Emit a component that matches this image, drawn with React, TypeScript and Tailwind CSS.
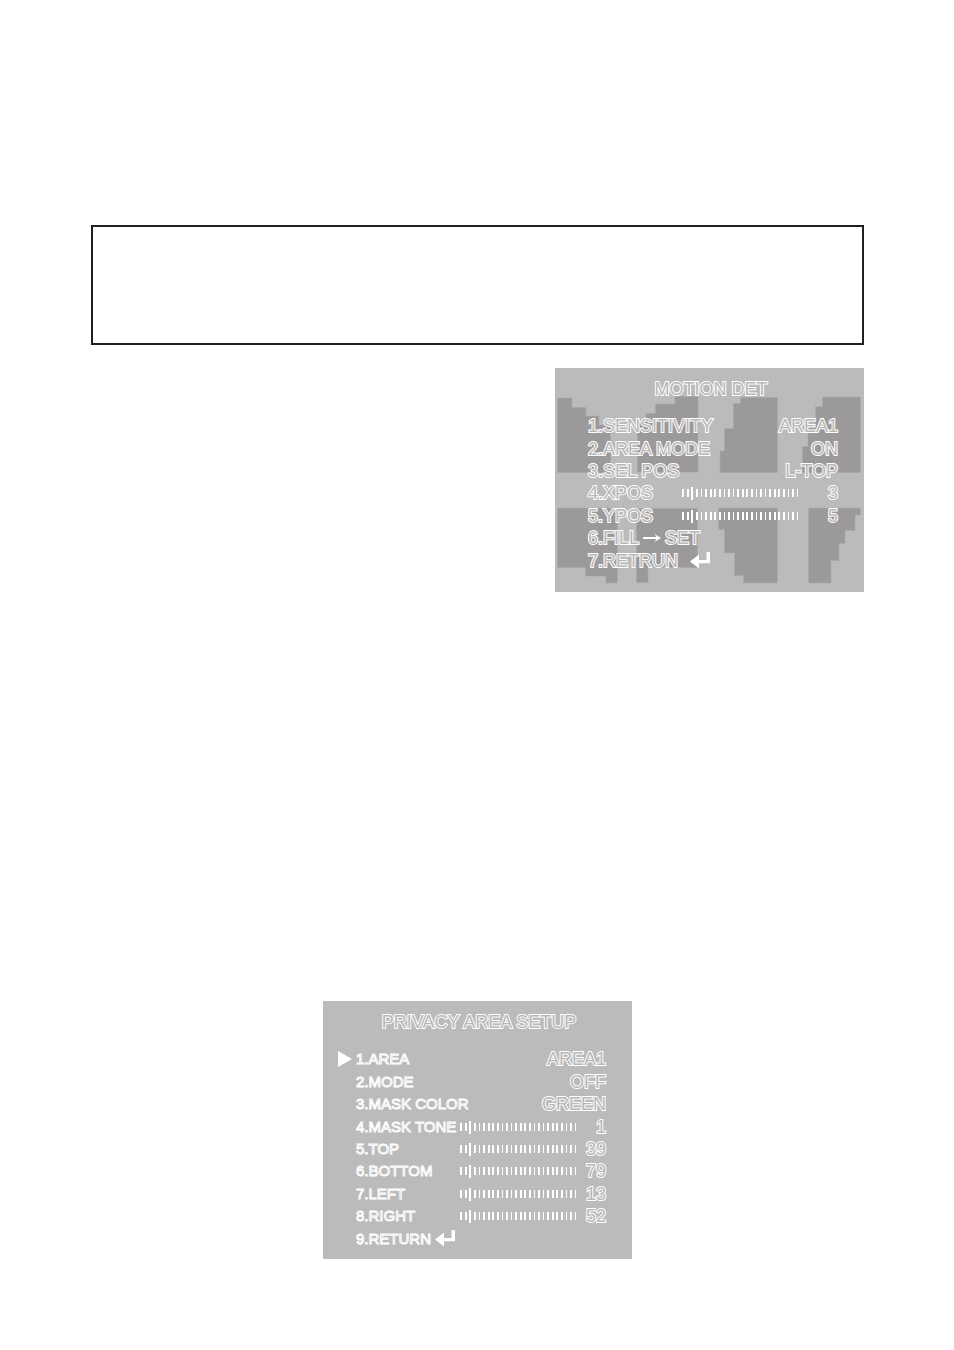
import type { ReactNode } from 'react'

interface RowProps {
  label: ReactNode
  value?: string
  level?: string
  selected?: boolean
  narrow?: boolean
}

const ticks = Array.from({ length: 26 }, (_, i) => i)

const outlined = 'text-[#b8b7b7] [-webkit-text-stroke:2px_white] [paint-order:stroke_fill]'
const outlinedSmall = 'text-transparent [-webkit-text-stroke:1px_white]'

function Level({ name }: { name: string }) {
  return (
    <span className="relative block h-4 w-[118px] shrink-0">
      <svg
        viewBox="0 0 118 16"
        className="block h-4 w-full"
        fill="#fff"
        shapeRendering="crispEdges"
        aria-hidden="true"
      >
        {ticks.map((i) => (
          <rect
            key={i}
            x={i === 2 ? 9 : i * 4.57 + 0.4}
            y={i === 2 ? 2 : 4}
            width={i === 2 ? 2 : 1.7}
            height={i === 2 ? 13 : 8}
          />
        ))}
      </svg>
      <input
        type="range"
        min={0}
        max={25}
        defaultValue={2}
        aria-label={name}
        className="absolute inset-0 h-full w-full cursor-pointer opacity-0"
      />
    </span>
  )
}

function ReturnIcon() {
  return (
    <svg viewBox="0 0 21 18" className="h-[18px] w-[21px] shrink-0" fill="#fff" aria-hidden="true">
      <path d="M0 9.5L9 2.5V8H16.5V0H20V11.2H9V16.5Z" />
    </svg>
  )
}

function Arrow() {
  return (
    <svg viewBox="0 0 18 10" className="h-[10px] w-[18px] shrink-0" fill="#fff" aria-hidden="true">
      <path d="M0 4H13.5L11.5 1L18 5L11.5 9L13.5 6H0Z" />
    </svg>
  )
}

function Row({ label, value, level, selected, narrow }: RowProps) {
  return (
    <li className="relative flex flex-1 items-center">
      {selected && (
        <svg viewBox="0 0 14 16" className="absolute -left-[18px] h-4 w-[14px]" fill="#fff" aria-hidden="true">
          <path d="M0 0L14 8L0 16Z" />
        </svg>
      )}
      <span
        className={
          narrow
            ? `flex w-[104px] shrink-0 items-center gap-1 text-[15px] whitespace-nowrap ${outlinedSmall}`
            : `flex w-[94px] shrink-0 items-center gap-1 whitespace-nowrap ${outlined}`
        }
      >
        {label}
      </span>
      {level && <Level name={level} />}
      {value && <span className={`ml-auto ${outlined}`}>{value}</span>}
    </li>
  )
}

function Mosaic() {
  return (
    <svg
      viewBox="0 0 309 224"
      className="absolute inset-0 h-full w-full"
      fill="#9c999a"
      stroke="#a9a7a8"
      strokeWidth="0.6"
      aria-hidden="true"
    >
      <path d="M2.5 30H17V39.5H31V48H44V57H55.5V104.5H2.5Z" />
      <path d="M82.5 104V55H91V45.5H100.5V36H120V28.5H143V104Z" />
      <path d="M165 104.5V83H169.5V60.5H178.5V35.5H185.5V29.5H222.5V104.5Z" />
      <path d="M247.5 104.5V78.5H253V60H260.5V38.5H267.5V29H305.5V104.5Z" />
      <path d="M2.5 140H62.5V215H51V208H30.5V199.5H2.5Z" />
      <path d="M81.5 140.5H142.5V199.5H93V214.5H81.5Z" />
      <path d="M163.5 140H222.5V215H188.5V207.5H179.5V185H169.5V161.5H163.5Z" />
      <path d="M253.5 140H305.5V147H300V162.5H290V175.5H284V192.5H276V215H253.5Z" />
    </svg>
  )
}

export default function App() {
  return (
    <main className="bg-white pt-[225px] pr-[90px] pb-[91px] pl-[91px] font-['Liberation_Sans',Arial,sans-serif] text-lg leading-[22px]">
      <div className="h-[120px] border-2 border-[#231f20]" />

      <section className="relative mt-[23px] ml-auto w-[309px] bg-[#bbbbbb] pt-[10px] pr-[26px] pb-5 pl-[33px]">
        <Mosaic />
        <div className="relative">
          <h2 className={`pr-1 text-center ${outlined}`}>MOTION DET</h2>
          <ul className="mt-[15px] flex h-[157px] flex-col">
            <Row label="1.SENSITIVITY" value="AREA1" />
            <Row label="2.AREA MODE" value="ON" />
            <Row label="3.SEL POS" value="L-TOP" />
            <Row label="4.XPOS" value="3" level="XPOS" />
            <Row label="5.YPOS" value="5" level="YPOS" />
            <Row label={<>6.FILL<Arrow />SET</>} />
            <Row label={<>7.RETRUN<span className="pl-2"><ReturnIcon /></span></>} />
          </ul>
        </div>
      </section>

      <section className="mx-auto mt-[409px] w-[309px] bg-[#bbbbbb] pt-[10px] pr-[26px] pb-[9px] pl-[33px]">
        <h2 className={`pr-1 text-center ${outlined}`}>PRIVACY AREA SETUP</h2>
        <ul className="mt-[15px] flex h-[202px] flex-col">
          <Row narrow selected label="1.AREA" value="AREA1" />
          <Row narrow label="2.MODE" value="OFF" />
          <Row narrow label="3.MASK COLOR" value="GREEN" />
          <Row narrow label="4.MASK TONE" value="1" level="MASK TONE" />
          <Row narrow label="5.TOP" value="39" level="TOP" />
          <Row narrow label="6.BOTTOM" value="79" level="BOTTOM" />
          <Row narrow label="7.LEFT" value="13" level="LEFT" />
          <Row narrow label="8.RIGHT" value="52" level="RIGHT" />
          <Row narrow label={<>9.RETURN<ReturnIcon /></>} />
        </ul>
      </section>
    </main>
  )
}
